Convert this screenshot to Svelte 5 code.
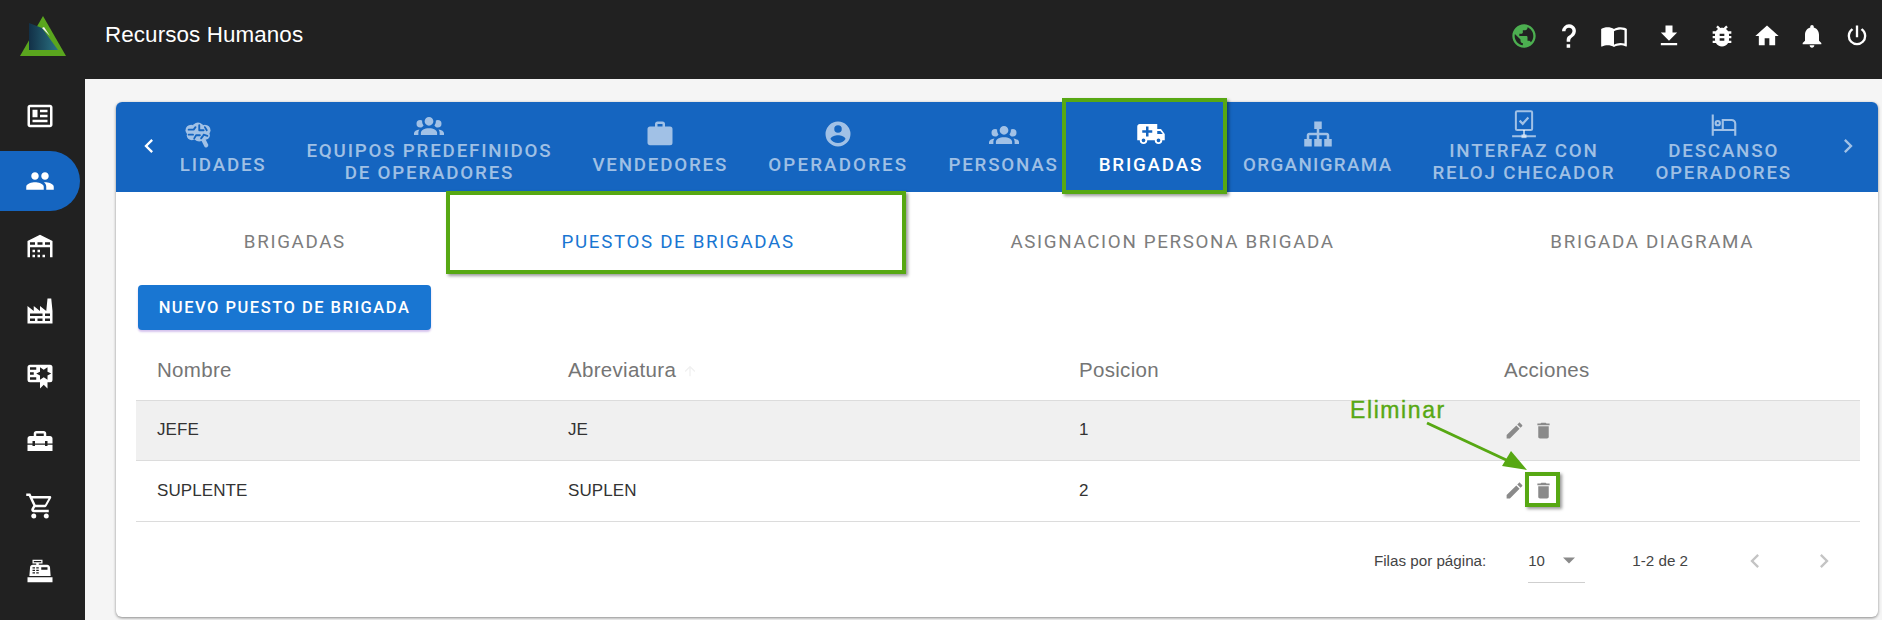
<script>
  const icons = {
    news: "M20 5L20 19L4 19L4 5H20M20 3H4C2.89 3 2 3.89 2 5V19C2 20.11 2.89 21 4 21H20C21.11 21 22 20.11 22 19V5C22 3.89 21.11 3 20 3M18 15H6V17H18V15M10 7H6V13H10V7M12 9H18V7H12V9M18 11H12V13H18V11Z",
    people: "M16 11c1.66 0 2.99-1.34 2.99-3S17.66 5 16 5c-1.66 0-3 1.34-3 3s1.34 3 3 3zm-8 0c1.66 0 2.99-1.34 2.99-3S9.66 5 8 5C6.34 5 5 6.34 5 8s1.34 3 3 3zm0 2c-2.33 0-7 1.17-7 3.5V19h14v-2.5c0-2.33-4.67-3.5-7-3.5zm8 0c-.29 0-.62.02-.97.05 1.16.84 1.97 1.97 1.97 3.45V19h6v-2.5c0-2.33-4.67-3.5-7-3.5z",
    warehouse: "M6 19H8V21H6V19M12 3L2 8V21H4V13H20V21H22V8L12 3M8 11H4V9H8V11M14 11H10V9H14V11M20 11H16V9H20V11M6 15H8V17H6V15M10 15H12V17H10V15M10 19H12V21H10V19M14 19H16V21H14V19Z",
    factory: "M4,18V20H8V18H4M4,14V16H14V14H4M10,18V20H14V18H10M16,14V16H20V14H16M16,18V20H20V18H16M2,22V8L7,12V8L12,12V8L17,12L18,2H21L22,12V22H2Z",
    certificate: "M4,3C2.89,3 2,3.89 2,5V15A2,2 0 0,0 4,17H12V22L15,19L18,22V17H20A2,2 0 0,0 22,15V8L22,6V5A2,2 0 0,0 20,3H16V3H4M12,5L15,7L18,5V8.5L21,10L18,11.5V15L15,13L12,15V11.5L9,10L12,8.5V5M4,5H9V7H4V5M4,9H7V11H4V9M4,13H9V15H4V13Z",
    toolbox: "M18 16H16V15H8V16H6V15H2V20H22V15H18V16M20 8H17V6C17 4.9 16.1 4 15 4H9C7.9 4 7 4.9 7 6V8H4C2.9 8 2 8.9 2 10V14H6V12H8V14H16V12H18V14H22V10C22 8.9 21.1 8 20 8M15 8H9V6H15V8Z",
    cart: "M17,18A2,2 0 0,1 19,20A2,2 0 0,1 17,22C15.89,22 15,21.1 15,20C15,18.89 15.89,18 17,18M1,2H4.27L5.21,4H20A1,1 0 0,1 21,5C21,5.17 20.95,5.34 20.88,5.5L17.3,11.97C16.96,12.58 16.3,13 15.55,13H8.1L7.2,14.63L7.17,14.75A0.25,0.25 0 0,0 7.42,15H19V17H7C5.89,17 5,16.1 5,15C5,14.65 5.09,14.32 5.24,14.04L6.6,11.59L3,4H1V2M7,18A2,2 0 0,1 9,20A2,2 0 0,1 7,22C5.89,22 5,21.1 5,20C5,18.89 5.89,18 7,18M16,11L18.78,6H6.14L8.5,11H16Z",
    register: "M2,17H22V21H2V17M6.25,7H9V6H6V3H14V6H11V7H17.8C18.8,7 19.8,8 20,9L20.5,16H3.5L4.05,9C4.05,8 5.05,7 6.25,7M13,9V11H18V9H13M6,9V10H8V9H6M9,9V10H11V9H9M6,11V12H8V11H6M9,11V12H11V11H9M6,13V14H8V13H6M9,13V14H11V13H9M7,4V5H13V4H7Z",
    globe: "M12 2C6.48 2 2 6.48 2 12s4.48 10 10 10 10-4.48 10-10S17.52 2 12 2zm-1 17.93c-3.95-.49-7-3.85-7-7.93 0-.62.08-1.21.21-1.79L9 15v1c0 1.1.9 2 2 2v1.93zm6.9-2.54c-.26-.81-1-1.39-1.9-1.39h-1v-3c0-.55-.45-1-1-1H8v-2h2c.55 0 1-.45 1-1V7h2c1.1 0 2-.9 2-2v-.41c2.93 1.19 5 4.06 5 7.41 0 2.08-.8 3.97-2.1 5.39z",
    help: "M10,19H13V22H10V19M12,2C17.35,2.22 19.68,7.62 16.5,11.67C15.67,12.67 14.33,13.33 13.67,14.17C13,15 13,16 13,17H10C10,15.33 10,13.92 10.67,12.92C11.33,11.92 12.67,11.33 13.5,10.67C15.92,8.43 15.32,5.26 12,5A3,3 0 0,0 9,8H6A6,6 0 0,1 12,2Z",
    book: "M21,5C19.89,4.65 18.67,4.5 17.5,4.5C15.55,4.5 13.45,4.9 12,6C10.55,4.9 8.45,4.5 6.5,4.5C4.55,4.5 2.45,4.9 1,6V20.65C1,20.9 1.25,21.15 1.5,21.15C1.6,21.15 1.65,21.1 1.75,21.1C3.1,20.45 5.05,20 6.5,20C8.45,20 10.55,20.4 12,21.5C13.35,20.65 15.8,20 17.5,20C19.15,20 20.85,20.3 22.25,21.05C22.35,21.1 22.4,21.1 22.5,21.1C22.75,21.1 23,20.85 23,20.6V6C22.4,5.55 21.75,5.25 21,5M21,18.5C19.9,18.15 18.7,18 17.5,18C15.8,18 13.35,18.65 12,19.5V8C13.35,7.15 15.8,6.5 17.5,6.5C18.7,6.5 19.9,6.65 21,7V18.5Z",
    download: "M19 9h-4V3H9v6H5l7 7 7-7zM5 18v2h14v-2H5z",
    bug: "M20 8h-2.81c-.45-.78-1.07-1.45-1.82-1.96L17 4.41 15.59 3l-2.17 2.17C12.96 5.06 12.49 5 12 5c-.49 0-.96.06-1.41.17L8.41 3 7 4.41l1.62 1.63C7.88 6.55 7.26 7.22 6.81 8H4v2h2.09c-.05.33-.09.66-.09 1v1H4v2h2v1c0 .34.04.67.09 1H4v2h2.81c1.04 1.79 2.97 3 5.19 3s4.15-1.21 5.19-3H20v-2h-2.09c.05-.33.09-.66.09-1v-1h2v-2h-2v-1c0-.34-.04-.67-.09-1H20V8zm-6 8h-4v-2h4v2zm0-4h-4v-2h4v2z",
    home: "M10 20v-6h4v6h5v-8h3L12 3 2 12h3v8z",
    bell: "M12 22c1.1 0 2-.9 2-2h-4c0 1.1.89 2 2 2zm6-6v-5c0-3.07-1.64-5.64-4.5-6.32V4c0-.83-.67-1.5-1.5-1.5s-1.5.67-1.5 1.5v.68C7.63 5.36 6 7.92 6 11v5l-2 2v1h16v-1l-2-2z",
    power: "M16.56,5.44L15.11,6.89C16.84,7.94 18,9.83 18,12A6,6 0 0,1 12,18A6,6 0 0,1 6,12C6,9.83 7.16,7.94 8.88,6.88L7.44,5.44C5.36,6.88 4,9.28 4,12A8,8 0 0,0 12,20A8,8 0 0,0 20,12C20,9.28 18.64,6.88 16.56,5.44M13,3H11V13H13",
    group: "M12,5.5A3.5,3.5 0 0,1 15.5,9A3.5,3.5 0 0,1 12,12.5A3.5,3.5 0 0,1 8.5,9A3.5,3.5 0 0,1 12,5.5M5,8C5.56,8 6.08,8.15 6.53,8.42C6.38,9.85 6.8,11.27 7.66,12.38C7.16,13.34 6.16,14 5,14A3,3 0 0,1 2,11A3,3 0 0,1 5,8M19,8A3,3 0 0,1 22,11A3,3 0 0,1 19,14C17.84,14 16.84,13.34 16.34,12.38C17.2,11.27 17.62,9.85 17.47,8.42C17.92,8.15 18.44,8 19,8M5.5,18.25C5.5,16.18 8.41,14.5 12,14.5C15.59,14.5 18.5,16.18 18.5,18.25V20H5.5V18.25M0,20V18.5C0,17.11 1.89,15.94 4.45,15.6C3.86,16.28 3.5,17.22 3.5,18.25V20H0M24,20H20.5V18.25C20.5,17.22 20.14,16.28 19.55,15.6C22.11,15.94 24,17.11 24,18.5V20Z",
    briefcase: "M10,2H14A2,2 0 0,1 16,4V6H20A2,2 0 0,1 22,8V19A2,2 0 0,1 20,21H4C2.89,21 2,20.1 2,19V8C2,6.89 2.89,6 4,6H8V4C8,2.89 8.89,2 10,2M14,6V4H10V6H14Z",
    account: "M12,19.2C9.5,19.2 7.29,17.92 6,16C6.03,14 10,12.9 12,12.9C14,12.9 17.97,14 18,16C16.71,17.92 14.5,19.2 12,19.2M12,5A3,3 0 0,1 15,8A3,3 0 0,1 12,11A3,3 0 0,1 9,8A3,3 0 0,1 12,5M12,2A10,10 0 0,0 2,12A10,10 0 0,0 12,22A10,10 0 0,0 22,12A10,10 0 0,0 12,2Z",
    ambulance: "M18,18.5A1.5,1.5 0 0,0 19.5,17A1.5,1.5 0 0,0 18,15.5A1.5,1.5 0 0,0 16.5,17A1.5,1.5 0 0,0 18,18.5M19.5,9.5H17V12H21.46L19.5,9.5M6,18.5A1.5,1.5 0 0,0 7.5,17A1.5,1.5 0 0,0 6,15.5A1.5,1.5 0 0,0 4.5,17A1.5,1.5 0 0,0 6,18.5M20,8L23,12V17H21A3,3 0 0,1 18,20A3,3 0 0,1 15,17H9A3,3 0 0,1 6,20A3,3 0 0,1 3,17H1V6C1,4.89 1.89,4 3,4H17V8H20M8,6V9H5V11H8V14H10V11H13V9H10V6H8Z",
    sitemap: "M9,2V8H11V11H5C3.89,11 3,11.89 3,13V16H1V22H7V16H5V13H11V16H9V22H15V16H13V13H19V16H17V22H23V16H21V13C21,11.89 20.11,11 19,11H13V8H15V2H9Z",
    pencil: "M3 17.25V21h3.75L17.81 9.94l-3.75-3.75L3 17.25zM20.71 7.04c.39-.39.39-1.02 0-1.41l-2.34-2.34c-.39-.39-1.02-.39-1.41 0l-1.83 1.83 3.75 3.75 1.83-1.83z",
    trash: "M6 19c0 1.1.9 2 2 2h8c1.1 0 2-.9 2-2V7H6v12zM19 4h-3.5l-1-1h-5l-1 1H5v2h14V4z",
  };

  const side = ["news", "people", "warehouse", "factory", "certificate", "toolbox", "cart", "register"];

  const top = [
    { icon: "globe", cls: "green" },
    { icon: "help" },
    { icon: "book" },
    { icon: "download", cls: "far" },
    { icon: "bug", cls: "far2" },
    { icon: "home" },
    { icon: "bell" },
    { icon: "power" },
  ];

  const tabs = [
    { icon: "brain", lines: ["HABILIDADES"] },
    { icon: "group", lines: ["EQUIPOS PREDEFINIDOS", "DE OPERADORES"] },
    { icon: "briefcase", lines: ["VENDEDORES"] },
    { icon: "account", lines: ["OPERADORES"], spacing: 2.16 },
    { icon: "group", lines: ["PERSONAS"] },
    { icon: "ambulance", lines: ["BRIGADAS"], active: true },
    { icon: "sitemap", lines: ["ORGANIGRAMA"], spacing: 1.35 },
    { icon: "clock", lines: ["INTERFAZ CON", "RELOJ CHECADOR"] },
    { icon: "bed", lines: ["DESCANSO", "OPERADORES"] },
  ];

  const subtabs = ["BRIGADAS", "PUESTOS DE BRIGADAS", "ASIGNACION PERSONA BRIGADA", "BRIGADA DIAGRAMA"];

  const rows = [
    { nombre: "JEFE", abrev: "JE", pos: 1 },
    { nombre: "SUPLENTE", abrev: "SUPLEN", pos: 2 },
  ];
</script>

<div class="app">
  <header class="topbar">
    <div class="logo">
      <svg width="46" height="40" viewBox="0 0 46 40">
        <defs>
          <linearGradient id="logoFill" x1="0" x2="1" y1="0" y2="0">
            <stop offset="0" stop-color="#123047" />
            <stop offset="1" stop-color="#2a7383" />
          </linearGradient>
        </defs>
        <polygon points="23,0 46,40 0,40" fill="#5aa61e" />
        <polygon points="9,7 22,12 38,34 9,34" fill="url(#logoFill)" />
        <polygon points="22,12 24,11 30,20" fill="#f4f4f4" />
      </svg>
    </div>
    <div class="title">Recursos Humanos</div>
    <nav class="actions">
      {#each top as item}
        <span class="action {item.cls ?? ''}">
          <svg width="28" height="28" viewBox="0 0 24 24"><path d={icons[item.icon]} fill="currentColor" /></svg>
        </span>
      {/each}
    </nav>
  </header>

  <aside class="sidebar">
    {#each side as name, i}
      <div class="side-item" class:active={i === 1}>
        <svg width="30" height="30" viewBox="0 0 24 24"><path d={icons[name]} fill="currentColor" /></svg>
      </div>
    {/each}
  </aside>

  <main class="main">
    <section class="card">
      <div class="tabbar">
        <div class="arrow">
          <svg width="28" height="28" viewBox="0 0 24 24"><path d="M15.41 7.41 14 6l-6 6 6 6 1.41-1.41L10.83 12z" fill="currentColor" /></svg>
        </div>
        <div class="scroller">
          {#each tabs as tab}
            <div class="tab" class:active={tab.active} class:two={tab.lines.length > 1}>
              <svg class="tab-icon" width="32" height="32" viewBox="0 0 24 24">
                {#if tab.icon === "brain"}
                  <g fill="#a1c1e6">
                    <circle cx="6.500" cy="9" r="4.500" />
                    <circle cx="12" cy="7.500" r="4.700" />
                    <circle cx="17.500" cy="9" r="4.500" />
                    <circle cx="7" cy="13" r="4" />
                    <circle cx="13" cy="13" r="5" />
                    <circle cx="18" cy="13" r="3.500" />
                  </g>
                  <path d="M16 16l2.500 5" stroke="#a1c1e6" stroke-width="3.400" stroke-linecap="round" />
                  <g fill="none" stroke="#1565c0" stroke-width="1.500" stroke-linecap="round" stroke-linejoin="round">
                    <path d="M4.500 8.500h4l1.500-2M4.500 12.500h3.500M9 15.500l1.500-2.500h3M13 5v4h3.500M17.500 6.500l1.500 2.500M16.500 12.500l3 1M14.500 15.500l1.500-2" />
                  </g>
                {:else if tab.icon === "clock"}
                  <g fill="none" stroke="currentColor" stroke-width="1.6">
                    <rect x="5.5" y="1" width="13" height="15" rx="1" />
                    <path d="M8.5 8.500l2.500 2.500 4.500-5" stroke-width="1.8" />
                    <path d="M12 16v4M2.500 21h19" />
                  </g>
                  <rect x="10" y="19.5" width="4" height="3" fill="currentColor" />
                {:else if tab.icon === "bed"}
                  <g fill="none" stroke="currentColor" stroke-width="1.7">
                    <path d="M3 3.500v17M3 16h18M21 20.500V11a3 3 0 0 0-3-3h-7v8" />
                    <circle cx="7" cy="10.500" r="1.700" />
                  </g>
                {:else}
                  <path d={icons[tab.icon]} fill="currentColor" />
                {/if}
              </svg>
              <div class="tab-label" style={tab.spacing ? `letter-spacing:${tab.spacing}px` : undefined}>
                {#each tab.lines as line}<div>{line}</div>{/each}
              </div>
            </div>
          {/each}
        </div>
        <div class="arrow right">
          <svg width="28" height="28" viewBox="0 0 24 24"><path d="M10 6 8.590 7.410 13.170 12l-4.580 4.590L10 18l6-6z" fill="currentColor" /></svg>
        </div>
      </div>

      <div class="body">
        <div class="subtabs">
          {#each subtabs as label, i}
            <div class="subtab" class:selected={i === 1}>{label}</div>
          {/each}
        </div>

        <button class="primary">NUEVO PUESTO DE BRIGADA</button>

        <table>
          <colgroup>
            <col style="width:411px" />
            <col style="width:511px" />
            <col style="width:425px" />
            <col />
          </colgroup>
          <thead>
            <tr>
              <th>Nombre</th>
              <th>
                Abreviatura
                <svg class="sort" width="16" height="16" viewBox="0 0 24 24"><path d="M4 12l1.410 1.410L11 7.830V20h2V7.830l5.580 5.590L20 12l-8-8z" fill="currentColor" /></svg>
              </th>
              <th>Posicion</th>
              <th>Acciones</th>
            </tr>
          </thead>
          <tbody>
            {#each rows as row, i}
              <tr class:shaded={i === 0}>
                <td>{row.nombre}</td>
                <td>{row.abrev}</td>
                <td>{row.pos}</td>
                <td>
                  <div class="row-actions">
                    <svg width="21" height="21" viewBox="0 0 24 24"><path d={icons.pencil} fill="currentColor" /></svg>
                    <svg width="21" height="21" viewBox="0 0 24 24"><path d={icons.trash} fill="currentColor" /></svg>
                  </div>
                </td>
              </tr>
            {/each}
          </tbody>
        </table>

        <div class="pager">
          <span class="pager-label">Filas por página:</span>
          <div class="select">
            <span>10</span>
            <svg width="24" height="24" viewBox="0 0 24 24"><path d="M6 9.500h12l-6 6z" fill="currentColor" /></svg>
          </div>
          <span class="range">1-2 de 2</span>
          <svg class="page-btn first" width="28" height="28" viewBox="0 0 24 24"><path d="M15.410 7.410 14 6l-6 6 6 6 1.410-1.410L10.830 12z" fill="currentColor" /></svg>
          <svg class="page-btn" width="28" height="28" viewBox="0 0 24 24"><path d="M10 6 8.590 7.410 13.170 12l-4.580 4.590L10 18l6-6z" fill="currentColor" /></svg>
        </div>
      </div>
    </section>
  </main>

  <!-- annotations drawn over the screenshot -->
  <div class="mark mark-tab"></div>
  <div class="mark mark-subtab"></div>
  <div class="mark mark-delete"></div>
  <div class="callout">Eliminar</div>
  <svg class="callout-arrow" width="120" height="70" viewBox="0 0 120 70">
    <line x1="6" y1="5" x2="96" y2="47" stroke="#57a813" stroke-width="3" />
    <polygon points="106,52 81,48 90,33" fill="#57a813" />
  </svg>
</div>

<style>
  :global(body) {
    margin: 0;
    background: #f5f5f5;
    overflow: hidden;
  }

  .app {
    position: relative;
    display: grid;
    grid-template-columns: 85px 1fr;
    grid-template-rows: 79px 1fr;
    width: 1882px;
    height: 620px;
    font-family: "Liberation Sans", Arial, sans-serif;
    overflow: hidden;
  }

  .topbar {
    grid-column: 1 / 3;
    display: flex;
    align-items: center;
    padding-bottom: 7px;
    box-sizing: border-box;
    background: #212121;
    color: #fff;
  }

  .logo {
    width: 85px;
    display: flex;
    justify-content: center;
    padding-left: 1px;
    box-sizing: border-box;
  }

  .title {
    margin-left: 20px;
    margin-bottom: 3px;
    font-size: 22.4px;
    letter-spacing: 0.1px;
  }

  .actions {
    margin-left: auto;
    margin-right: 3px;
    display: flex;
  }

  .action {
    width: 45px;
    display: flex;
    justify-content: center;
  }

  .action.green {
    color: #4caf50;
  }

  .action.far {
    margin-left: 10px;
  }

  .action.far2 {
    margin-left: 8px;
  }

  .sidebar {
    background: #212121;
    color: #fff;
    padding-top: 7px;
    display: flex;
    flex-direction: column;
    gap: 5px;
  }

  .side-item {
    width: 80px;
    height: 60px;
    display: flex;
    align-items: center;
    justify-content: center;
  }

  .side-item.active {
    background: #1565c0;
    border-radius: 0 30px 30px 0;
  }

  .main {
    padding: 23px 4px 3px 31px;
    min-width: 0;
  }

  .card {
    height: 100%;
    background: #fff;
    border-radius: 6px;
    box-shadow: 0 1px 3px rgba(0, 0, 0, 0.45);
    overflow: hidden;
  }

  .tabbar {
    height: 90px;
    display: flex;
    background: #1565c0;
    color: #fff;
  }

  .arrow {
    width: 65px;
    flex: none;
    display: flex;
    align-items: center;
    justify-content: center;
    padding-bottom: 2px;
    box-sizing: border-box;
  }

  .arrow.right {
    width: 66px;
    padding-left: 6px;
    color: rgba(255, 255, 255, 0.6);
  }

  .scroller {
    flex: 1;
    min-width: 0;
    display: flex;
    justify-content: flex-end;
    overflow: hidden;
  }

  .tab {
    flex: none;
    padding: 0 20px;
    display: flex;
    flex-direction: column;
    align-items: center;
    justify-content: center;
    gap: 5px;
    color: rgba(255, 255, 255, 0.6);
    font-family: Roboto, sans-serif;
    font-size: 18.75px;
    font-weight: 500;
    letter-spacing: 1.8px;
    line-height: 22px;
    text-align: center;
  }

  .tab.two {
    gap: 0;
  }

  .tab.active {
    color: #fff;
  }

  .tab-icon {
    height: 30px;
  }

  .body {
    padding: 0 18px 0 20px;
  }

  .subtabs {
    margin: 9px -2px 0 0;
    height: 81px;
    display: flex;
  }

  .subtab {
    flex: 1 1 auto;
    display: flex;
    align-items: center;
    justify-content: center;
    color: #7d7d7d;
    font-family: Roboto, sans-serif;
    font-size: 18.75px;
    letter-spacing: 1.65px;
  }

  .subtab.selected {
    color: #1976d2;
  }

  .primary {
    margin: 3px 0 0 2px;
    display: block;
    width: 293px;
    height: 45px;
    border: 0;
    border-radius: 4px;
    background: #1976d2;
    color: #fff;
    font-family: Roboto, sans-serif;
    font-size: 16.5px;
    font-weight: 500;
    letter-spacing: 1.5px;
    box-shadow: 0 2px 2px rgba(120, 60, 200, 0.3);
  }

  table {
    margin-top: 8px;
    width: 100%;
    table-layout: fixed;
    border-collapse: collapse;
  }

  th {
    height: 62px;
    padding: 3px 0 0 21px;
    text-align: left;
    font-size: 20.5px;
    font-weight: 400;
    color: #757575;
    letter-spacing: 0.3px;
    border-bottom: 1px solid #dcdcdc;
    box-sizing: border-box;
  }

  td {
    height: 60.5px;
    padding: 0 0 0 21px;
    font-size: 17px;
    color: #333;
    letter-spacing: 0.1px;
    border-bottom: 1px solid #dcdcdc;
    box-sizing: border-box;
  }

  tr.shaded td {
    background: #f0f0f0;
  }

  .sort {
    color: #f0f0f0;
    vertical-align: -2px;
  }

  .row-actions {
    display: flex;
    gap: 8px;
    color: #8a8a8a;
  }

  .pager {
    height: 78px;
    display: flex;
    align-items: center;
    justify-content: flex-end;
    padding-right: 22px;
    color: #444;
    font-size: 15.2px;
  }

  .select {
    margin-left: 42px;
    width: 57px;
    height: 44px;
    margin-top: 0;
    box-sizing: border-box;
    display: flex;
    align-items: center;
    justify-content: space-between;
    border-bottom: 1px solid #cfcfcf;
    padding-right: 4px;
    color: #8a8a8a;
  }

  .select span {
    color: #444;
    font-size: 15px;
  }

  .range {
    margin-left: 47px;
  }

  .page-btn {
    color: #c4c4c4;
    margin-left: 41px;
  }

  .page-btn.first {
    margin-left: 53px;
  }

  .mark {
    position: absolute;
    box-sizing: border-box;
    border: 4px solid #57a813;
    box-shadow: 2px 2px 3px rgba(0, 0, 0, 0.4);
  }

  .mark-tab {
    left: 1062px;
    top: 98px;
    width: 165px;
    height: 96px;
  }

  .mark-subtab {
    left: 446px;
    top: 191px;
    width: 460px;
    height: 83px;
  }

  .mark-delete {
    left: 1525px;
    top: 472px;
    width: 35px;
    height: 35px;
  }

  .callout {
    position: absolute;
    left: 1350px;
    top: 397px;
    color: #57a813;
    font-size: 23px;
    letter-spacing: 1.6px;
    -webkit-text-stroke: 0.4px #57a813;
  }

  .callout-arrow {
    position: absolute;
    left: 1421px;
    top: 418px;
  }
</style>
